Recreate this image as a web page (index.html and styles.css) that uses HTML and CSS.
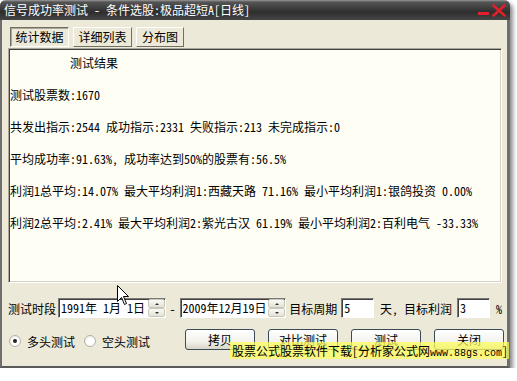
FILE: index.html
```html
<!DOCTYPE html>
<html lang="zh-CN">
<head>
    <meta charset="UTF-8">
    <title>信号成功率测试</title>
    <link rel="stylesheet" href="styles.css">
</head>
<body>
    <div class="window">
        <!-- Title bar -->
        <div class="titlebar">
            <span class="title">信号成功率测试 - 条件选股:极品超短A[日线]</span>
            <span class="min-btn"></span>
            <svg class="close-btn" width="14" height="13" viewBox="0 0 14 13">
                <path d="M1.5 1.5 L12.5 11.5 M12.5 1.5 L1.5 11.5" stroke="#e0202a" stroke-width="2.6" stroke-linecap="round"/>
            </svg>
        </div>

        <div class="client">
            <!-- Tabs -->
            <div class="tabs">
                <div class="tab active">统计数据</div>
                <div class="tab">详细列表</div>
                <div class="tab">分布图</div>
            </div>

            <!-- Result text -->
            <div class="result">
                <p class="heading">测试结果</p>
                <p>测试股票数:1670</p>
                <p>共发出指示:2544 成功指示:2331 失败指示:213 未完成指示:0</p>
                <p>平均成功率:91.63%, 成功率达到50%的股票有:56.5%</p>
                <p>利润1总平均:14.07% 最大平均利润1:西藏天路 71.16% 最小平均利润1:银鸽投资 0.00%</p>
                <p>利润2总平均:2.41% 最大平均利润2:紫光古汉 61.19% 最小平均利润2:百利电气 -33.33%</p>
            </div>

            <!-- Period / target row -->
            <div class="row params">
                <span class="label">测试时段</span>
                <div class="field date-a">
                    <span class="value">1991年 1月 1日</span>
                    <div class="spin"><span class="up"></span><span class="down"></span></div>
                </div>
                <span class="dash">-</span>
                <div class="field date-b">
                    <span class="value">2009年12月19日</span>
                    <div class="spin"><span class="up"></span><span class="down"></span></div>
                </div>
                <span class="label gap-l">目标周期</span>
                <div class="field small"><span class="value">5</span></div>
                <span class="label gap-m">天, 目标利润</span>
                <div class="field small"><span class="value">3</span></div>
                <span class="label pct">%</span>
            </div>

            <!-- Mode / buttons row -->
            <div class="row actions">
                <label class="radio"><span class="dot checked"></span>多头测试</label>
                <label class="radio second"><span class="dot"></span>空头测试</label>
                <button class="btn first">拷贝</button>
                <button class="btn">对比测试</button>
                <button class="btn">测试</button>
                <button class="btn">关闭</button>
            </div>
        </div>

        <!-- Overlay watermark -->
        <div class="ad">股票公式股票软件下载[分析家公式网<span class="url">www.88gs.com</span>]</div>

        <!-- Mouse pointer -->
        <svg class="cursor" width="13" height="21" viewBox="0 0 13 21">
            <path d="M0.5 0.5 L0.5 16.5 L4.5 12.5 L7.5 19.5 L9.5 18.5 L6.5 11.5 L11.5 11.5 Z" fill="#fff" stroke="#000" stroke-width="1"/>
        </svg>
    </div>
</body>
</html>
```

FILE: styles.css
```css
* {
    margin: 0;
    padding: 0;
    box-sizing: border-box;
}

body {
    background: #fff;
    font-family: "Noto Sans Mono CJK SC", "Noto Sans CJK SC", sans-serif;
    font-size: 12px;
    color: #000;
}

.window {
    position: relative;
    width: 510px;
    height: 368px;
    background: #ece9d8;
    border-left: 2px solid #6e6e6e;
    border-right: 3px solid #6e6e6e;
    border-bottom: 2px solid #5a5a5a;
    border-radius: 6px 6px 0 0;
    box-shadow: 3px 3px 4px rgba(0, 0, 0, 0.45);
}

/* Title bar */
.titlebar {
    height: 20px;
    margin: 0 -3px 0 -2px;
    padding-left: 4px;
    display: flex;
    align-items: center;
    border-radius: 6px 6px 0 0;
    background: linear-gradient(to bottom, #9a9a9a 0, #555 2px, #3a3a3a 45%, #2e2e2e 60%, #454545 100%);
}

.title {
    flex: 1;
    color: #fff;
    line-height: 20px;
    white-space: pre;
}

.min-btn {
    width: 11px;
    height: 3px;
    margin: 7px 3px 0 0;
    background: #e0202a;
}

.close-btn {
    margin-right: 4px;
}

/* Client area */
.client {
    padding: 7px 5px 0 6px;
}

.tabs {
    display: flex;
    gap: 4px;
    margin-left: 2px;
    height: 20px;
}

.tab {
    width: 59px;
    line-height: 18px;
    text-align: center;
    border: 1px solid;
    border-color: #fff #716f64 #716f64 #fff;
}

.tab:last-child {
    width: 48px;
}

.tab.active {
    border-color: #716f64 #fff #fff #716f64;
    box-shadow: inset 1px 1px 0 #aca899;
}

.result {
    height: 235px;
    margin-top: 1px;
    padding: 6px 0 0 1px;
    background: #fefef4;
    border: 1px solid;
    border-color: #aca899 #fff #fff #aca899;
    box-shadow: inset 1px 1px 0 #404040, inset -1px -1px 0 #d4d0c8;
}

.result p {
    line-height: 16px;
    margin-bottom: 16px;
    white-space: pre;
}

.result .heading {
    padding-left: 60px;
}

/* Rows */
.row {
    display: flex;
    align-items: center;
    white-space: nowrap;
}

.params {
    height: 20px;
    margin-top: 15px;
}

.label {
    white-space: pre;
}

.field {
    height: 20px;
    display: flex;
    background: #fff;
    border: 1px solid;
    border-color: #7a7a7a #fff #fff #7a7a7a;
    box-shadow: inset 1px 1px 0 #404040;
}

.field .value {
    flex: 1;
    padding: 1px 0 0 2px;
    line-height: 16px;
    white-space: pre;
}

.date-a {
    width: 108px;
    margin-left: 2px;
}

.date-b {
    width: 107px;
}

.dash {
    width: 14px;
    text-align: center;
}

.small {
    width: 33px;
}

.gap-l {
    margin: 0 4px 0 3px;
}

.gap-m {
    margin: 0 5px 0 6px;
}

.pct {
    margin-left: 6px;
}

.spin {
    width: 17px;
    display: flex;
    flex-direction: column;
}

.spin span {
    flex: 1;
    position: relative;
    background: linear-gradient(to bottom, #fbfbf8, #e4e2d6);
    border: 1px solid #c9c7ba;
    border-radius: 2px;
}

.spin span::after {
    content: "";
    position: absolute;
    left: 6px;
    top: 3px;
    border-left: 2px solid transparent;
    border-right: 2px solid transparent;
}

.spin .up::after {
    border-bottom: 2px solid #333;
}

.spin .down::after {
    border-top: 2px solid #333;
}

.actions {
    height: 21px;
    margin-top: 11px;
}

.radio {
    display: flex;
    align-items: center;
    gap: 6px;
    margin-top: 3px;
    margin-left: 1px;
}

.radio.second {
    margin-left: 9px;
}

.dot {
    flex: none;
    width: 12px;
    height: 12px;
    border-radius: 50%;
    background: radial-gradient(circle at 60% 60%, #fff 40%, #e6e4da);
    border: 1px solid #b4b2a6;
    position: relative;
}

.dot.checked::after {
    content: "";
    position: absolute;
    left: 3px;
    top: 3px;
    width: 4px;
    height: 4px;
    border-radius: 50%;
    background: #222;
}

.btn {
    flex: none;
    width: 70px;
    height: 21px;
    margin-left: 13px;
    font: inherit;
    color: #000;
    border: 1px solid #3c4a58;
    border-radius: 3px;
    background: linear-gradient(to bottom, #fff 0, #f3f2ec 60%, #d8d5c8 100%);
}

.btn.first {
    margin-left: 35px;
}

/* Overlay */
.ad {
    position: absolute;
    left: 228px;
    top: 342px;
    width: 279px;
    height: 17px;
    padding-left: 2px;
    line-height: 17px;
    background: rgba(255, 255, 90, 0.72);
    white-space: pre;
}

.ad .url {
    font-family: "Liberation Mono", monospace;
    font-size: 10px;
}

.cursor {
    position: absolute;
    left: 115px;
    top: 285px;
}
```
